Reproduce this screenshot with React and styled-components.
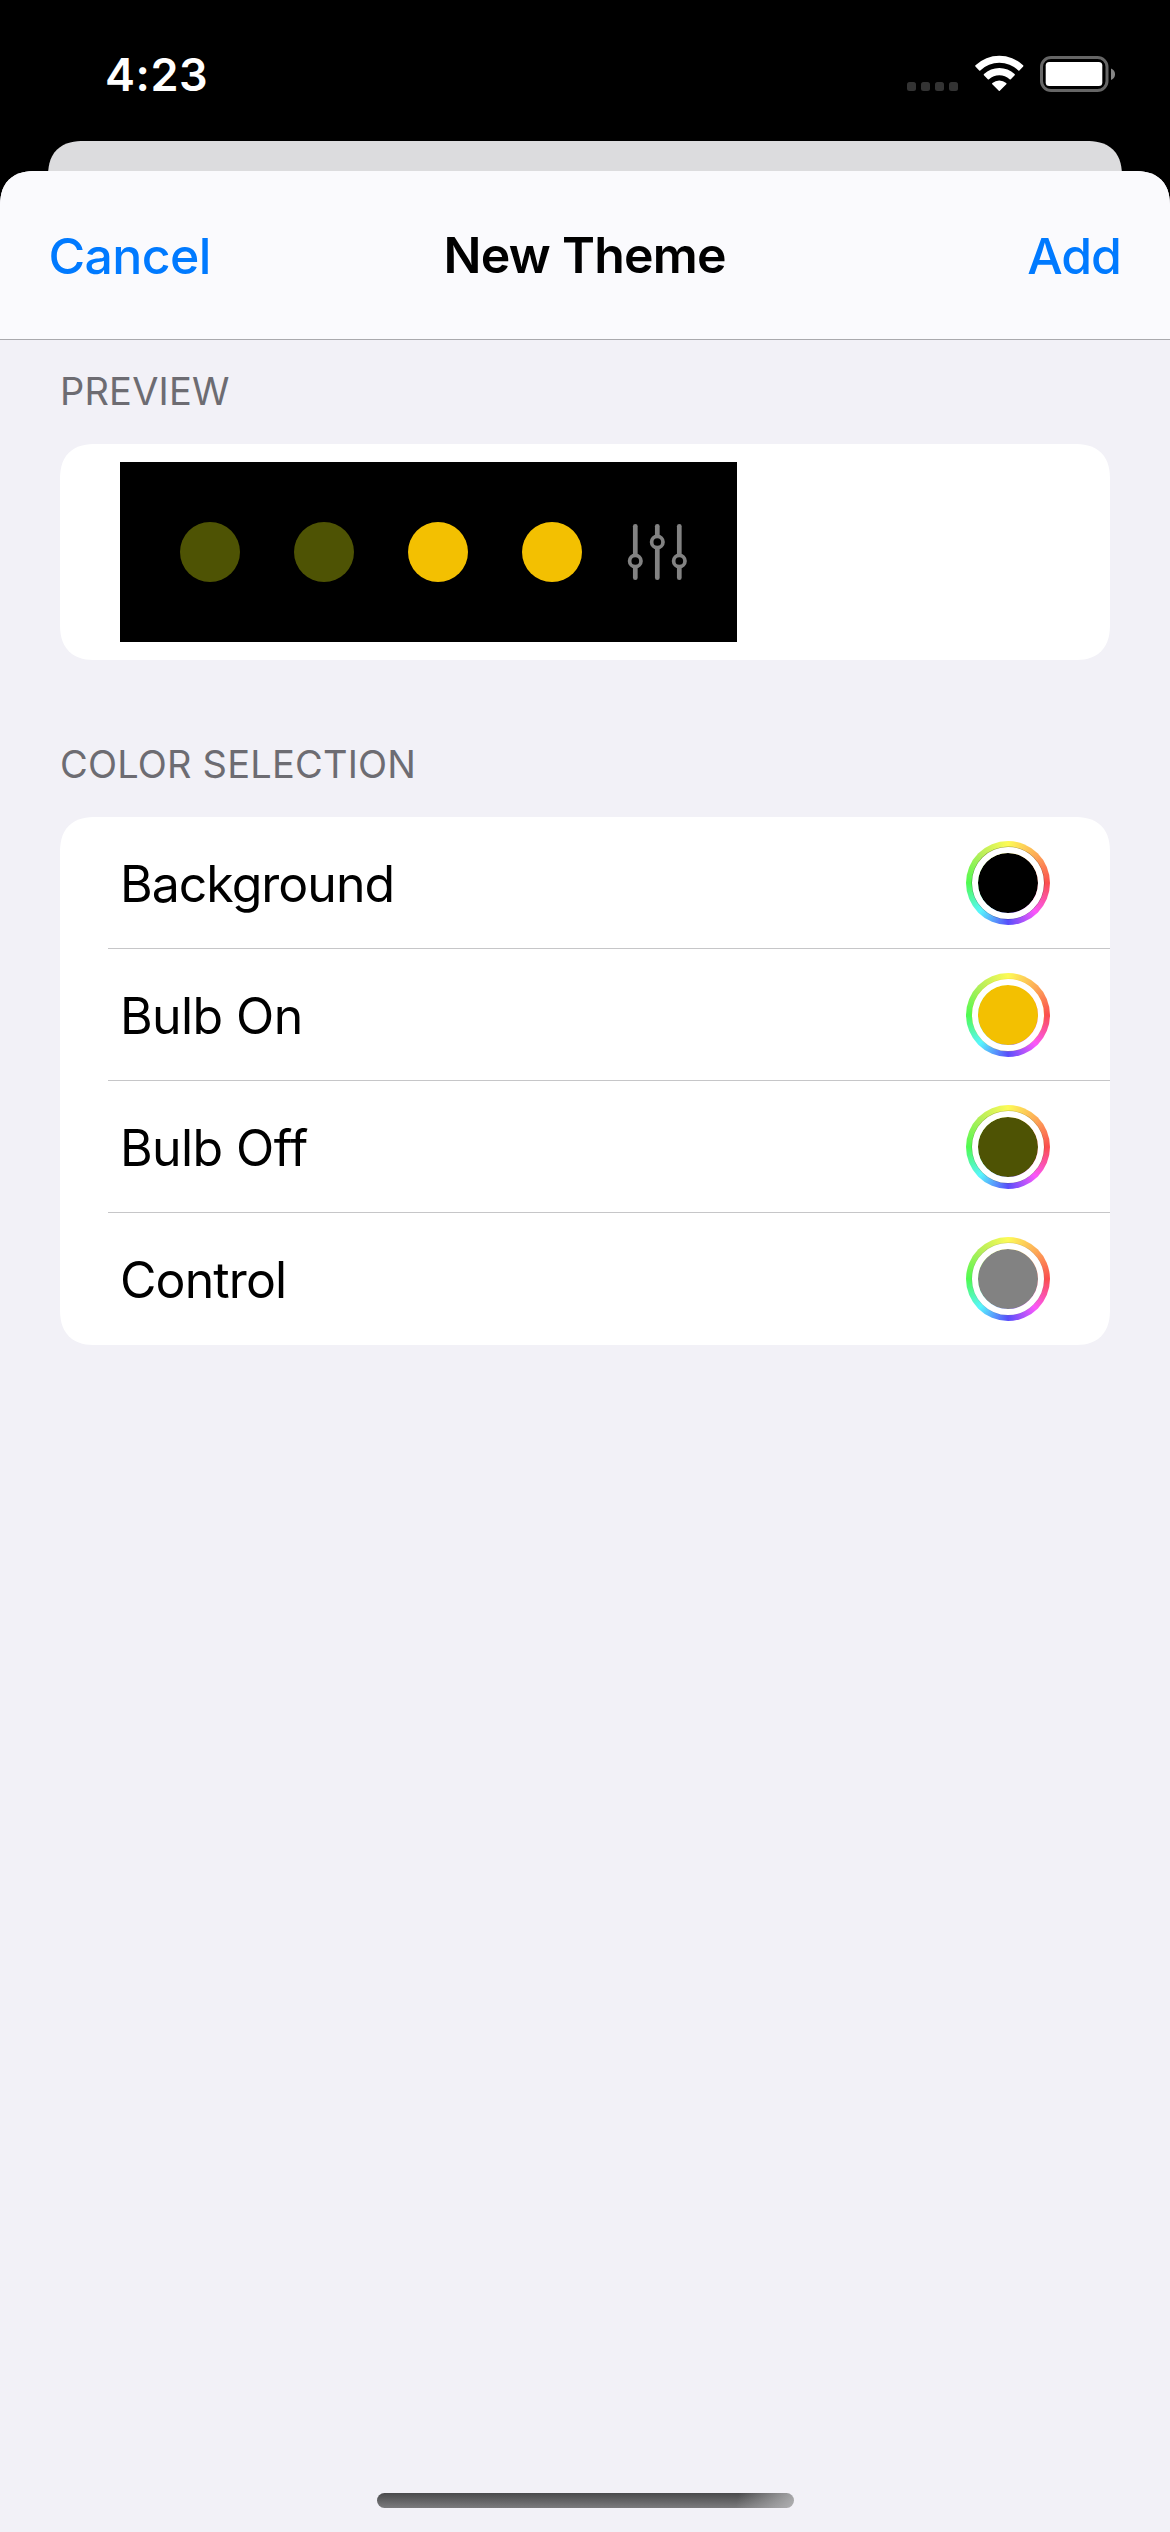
import React from "react";
import styled, { createGlobalStyle } from "styled-components";

const GlobalStyle = createGlobalStyle`
  *, *::before { box-sizing: border-box; }
  body {
    margin: 0;
    background: #000;
    font-family: Inter, "Liberation Sans", sans-serif;
    -webkit-font-smoothing: antialiased;
  }
`;

const theme = {
  background: "#000000",
  bulbOn: "#f3c001",
  bulbOff: "#4e5304",
  control: "#828282",
};

const Screen = styled.div`
  display: flex;
  flex-direction: column;
  width: 1170px;
  height: 2532px;
  overflow: hidden;
  background: #000;
`;

const StatusBar = styled.header`
  display: flex;
  align-items: flex-start;
  justify-content: space-between;
  flex: none;
  height: 141px;
  padding: 55px 55px 0 105px;
`;

const Clock = styled.time`
  margin-top: 2px;
  color: #fff;
  font-size: 45px;
  font-weight: 600;
  line-height: 35px;
  letter-spacing: 0.55px;
`;

const StatusIcons = styled.div`
  display: flex;
  align-items: flex-end;
  height: 36px;
  gap: 16.5px;
`;

const Signal = styled.div`
  display: flex;
  gap: 5px;
`;

const SignalDot = styled.i`
  width: 9px;
  height: 9px;
  border-radius: 2.5px;
  background: #333;
`;

const WifiGlyph = styled.svg`
  display: block;
  width: 49px;
  height: 36px;
`;

const BatteryGlyph = styled.svg`
  display: block;
  width: 75px;
  height: 36px;
  margin-bottom: -1px;
`;

const BackSheet = styled.div`
  flex: none;
  height: 40px;
  margin: 0 48px -10px;
  border-radius: 36px 36px 0 0;
  corner-shape: superellipse(1.3);
  background: #dcdcde;
`;

const Sheet = styled.main`
  position: relative;
  display: flex;
  flex: 1;
  flex-direction: column;
  overflow: hidden;
  border-radius: 36px 36px 0 0;
  corner-shape: superellipse(1.3);
  background: #f2f1f7;
`;

const NavBar = styled.nav`
  display: grid;
  grid-template-columns: 1fr auto 1fr;
  align-items: center;
  flex: none;
  height: 169px;
  padding: 0 49px 0 48.5px;
  border-bottom: 1px solid #a9a9ad;
  background: #fafafd;
`;

const NavTitle = styled.h1`
  margin: 0;
  font-size: 50px;
  font-weight: 600;
  line-height: 60px;
  letter-spacing: -0.75px;
`;

const NavButton = styled.button`
  justify-self: ${({ $end }) => ($end ? "end" : "start")};
  margin: 0;
  padding: 2px 0 0;
  border: 0;
  background: none;
  color: #007aff;
  font: 540 50px/60px Inter, "Liberation Sans", sans-serif;
  letter-spacing: ${({ $end }) => ($end ? "-1px" : "-0.6px")};
`;

const SectionTitle = styled.h2`
  flex: none;
  height: ${({ $height }) => $height}px;
  margin: 0;
  padding: ${({ $top }) => $top}px 60px 0;
  color: #6d6c72;
  font-size: 38px;
  font-weight: 400;
  line-height: 46px;
  letter-spacing: 0.2px;
`;

const Card = styled.section`
  flex: none;
  margin: 0 60px;
  overflow: hidden;
  border-radius: 36px;
  corner-shape: superellipse(1.3);
  background: #fff;
`;

const PreviewCard = styled(Card)`
  padding: 18px 60px;
`;

const Preview = styled.div`
  display: flex;
  align-items: center;
  gap: 54px;
  width: 617px;
  height: 180px;
  padding: 0 50px 0 60px;
  background: ${theme.background};
`;

const Bulb = styled.span`
  flex: none;
  width: 60px;
  height: 60px;
  border-radius: 50%;
  background: ${({ $on }) => ($on ? theme.bulbOn : theme.bulbOff)};
`;

const SlidersGlyph = styled.svg`
  display: block;
  flex: none;
  width: 60px;
  height: 60px;
  margin-left: -9px;
`;

const ColorRow = styled.div`
  display: flex;
  align-items: center;
  justify-content: space-between;
  height: 132px;
  padding: 0 60px;

  &:not(:last-child) {
    background: linear-gradient(#c6c6c8, #c6c6c8) 48px 131px / 100% 1px no-repeat;
  }
`;

const RowLabel = styled.span`
  margin-top: 2px;
  font-size: 50px;
  line-height: 60px;
  letter-spacing: ${({ $tracking }) => $tracking}px;
`;

const ColorWell = styled.button`
  display: grid;
  place-items: center;
  width: 84px;
  height: 84px;
  padding: 0;
  border: 0;
  border-radius: 50%;
  background: conic-gradient(
    #fdfb57 0deg,
    #fdaa57 45deg,
    #fb4e4e 90deg,
    #fb57fb 137deg,
    #584ffb 180deg,
    #57f6fd 225deg,
    #4ffb50 270deg,
    #b4ee59 315deg,
    #fdfb57 360deg
  );
`;

const WellColor = styled.span`
  width: 72px;
  height: 72px;
  border: 6px solid #fff;
  border-radius: 50%;
  background: ${({ $color }) => $color};
  background-clip: padding-box;
  box-shadow: 0 0 0 0.5px color-mix(in srgb, ${({ $color }) => $color} 35%, transparent);
`;

const HomeIndicator = styled.div`
  align-self: center;
  flex: none;
  width: 417px;
  height: 15px;
  margin: auto 0 24px 1px;
  border-radius: 8px;
  background:
    linear-gradient(104deg, rgba(185, 185, 187, 0) 86%, rgba(185, 185, 187, 0.85) 100%),
    linear-gradient(#4a4a4c, #7b7b7d);
`;

const Wifi = () => (
  <WifiGlyph viewBox="0 0 49 36" fill="#fff">
    <path d="M0.4 11.4Q-.1 10.8.5 10.2A34.5 34.5 0 0 1 48.1 10.2Q48.7 10.8 48.2 11.4L44.4 15.4Q43.9 15.9 43.3 15.4A27.6 27.6 0 0 0 5.3 15.4Q4.7 15.9 4.2 15.4Z" />
    <path d="M8.9 20.3Q8.4 19.7 9 19.1A22.2 22.2 0 0 1 39.6 19.1Q40.2 19.7 39.7 20.3L35.8 24.2Q35.2 24.8 34.6 24.2A15.6 15.6 0 0 0 14 24.2Q13.4 24.8 12.8 24.2Z" />
    <path d="M17.3 29.2Q16.8 28.6 17.4 28.1A10.6 10.6 0 0 1 31.2 28.1Q31.8 28.6 31.3 29.2L24.8 35.7Q24.3 36.1 23.8 35.7Z" />
  </WifiGlyph>
);

const Battery = () => (
  <BatteryGlyph viewBox="0 0 75 36">
    <rect x="1.5" y="1.5" width="65.5" height="33" rx="9.5" fill="none" stroke="#666" strokeWidth="3" />
    <rect x="5.7" y="6" width="56.6" height="24" rx="3.5" fill="#fff" />
    <path d="M71 12.5Q75 14 75 18.2T71 24Z" fill="#858585" />
  </BatteryGlyph>
);

const sliders = [
  { x: 8.3, knob: 39 },
  { x: 30.3, knob: 20 },
  { x: 52.3, knob: 39 },
];

const Sliders = () => (
  <SlidersGlyph viewBox="0 0 60 60" stroke={theme.control}>
    {sliders.map(({ x, knob }) => (
      <g key={x}>
        <path d={`M${x} 4.3V55.7`} strokeWidth="4.7" strokeLinecap="round" />
        <circle cx={x} cy={knob} r="5.7" strokeWidth="3.7" fill={theme.background} />
      </g>
    ))}
  </SlidersGlyph>
);

const rows = [
  { label: "Background", color: theme.background, tracking: -1 },
  { label: "Bulb On", color: theme.bulbOn, tracking: -0.6 },
  { label: "Bulb Off", color: theme.bulbOff, tracking: -0.6 },
  { label: "Control", color: theme.control, tracking: -0.9 },
];

export default function App() {
  return (
    <Screen>
      <GlobalStyle />
      <StatusBar>
        <Clock>4:23</Clock>
        <StatusIcons>
          <Signal>
            <SignalDot />
            <SignalDot />
            <SignalDot />
            <SignalDot />
          </Signal>
          <Wifi />
          <Battery />
        </StatusIcons>
      </StatusBar>
      <BackSheet />
      <Sheet>
        <NavBar>
          <NavButton>Cancel</NavButton>
          <NavTitle>New Theme</NavTitle>
          <NavButton $end>Add</NavButton>
        </NavBar>
        <SectionTitle $height={104} $top={28}>PREVIEW</SectionTitle>
        <PreviewCard>
          <Preview>
            <Bulb />
            <Bulb />
            <Bulb $on />
            <Bulb $on />
            <Sliders />
          </Preview>
        </PreviewCard>
        <SectionTitle $height={157} $top={81}>COLOR SELECTION</SectionTitle>
        <Card>
          {rows.map(({ label, color, tracking }) => (
            <ColorRow key={label}>
              <RowLabel $tracking={tracking}>{label}</RowLabel>
              <ColorWell aria-label={label}>
                <WellColor $color={color} />
              </ColorWell>
            </ColorRow>
          ))}
        </Card>
        <HomeIndicator />
      </Sheet>
    </Screen>
  );
}
